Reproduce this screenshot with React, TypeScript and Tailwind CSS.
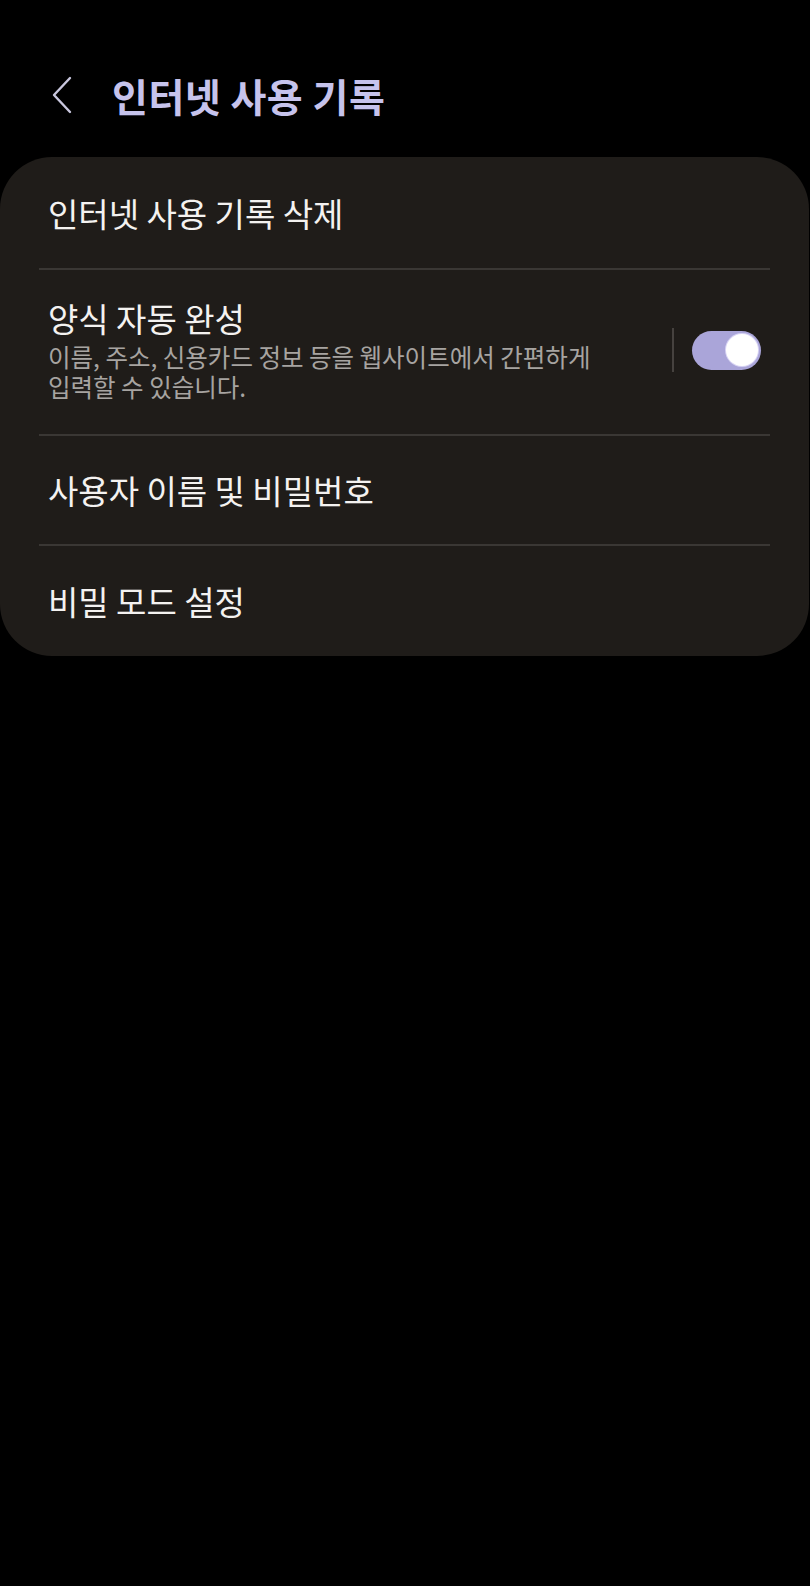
const font = { fontFamily: '"Noto Sans CJK KR", "Noto Sans", sans-serif' };

function Row({ children, h }: { children: React.ReactNode; h: string }) {
  return <div className={`flex items-center px-12 text-[33px] text-[#f4f2f0] leading-10 ${h}`}>{children}</div>;
}

function Divider() {
  return <div className="mx-[39px] h-[2px] bg-[#3a3734]" />;
}

export default function App() {
  return (
    <div className="min-h-[1586px] w-full bg-black pt-[71px]" style={font}>
      {/* HEADER */}
      <header className="flex items-center h-[48px] mb-[38px]">
        <div className="flex w-[112px] justify-start pl-[51px]">
          <svg width="22" height="38" viewBox="0 0 22 38" fill="none">
            <path d="M19 2 L3 19 L19 36" stroke="#c9c7de" strokeWidth="2.4" strokeLinecap="round" strokeLinejoin="round" />
          </svg>
        </div>
        <h1 className="text-[39px] font-bold text-[#c6c3ec] tracking-[0.5px]">인터넷 사용 기록</h1>
      </header>

      {/* CARD */}
      <section className="mr-[1px] rounded-[52px] bg-[#1f1c19]">
        <Row h="h-[111px]">인터넷 사용 기록 삭제</Row>
        <Divider />
        <div className="flex items-center pl-12 pr-[48px] pt-[28px] pb-[32px]">
          <div className="flex-1 min-w-0">
            <div className="text-[33px] leading-10 text-[#f4f2f0]">양식 자동 완성</div>
            <div className="mt-[4px] text-[24.5px] leading-[30px] text-[#a7a4a1]">
              이름, 주소, 신용카드 정보 등을 웹사이트에서 간편하게
              <br />
              입력할 수 있습니다.
            </div>
          </div>
          <div className="ml-4 h-[44px] w-[2px] bg-[#46423f]" />
          <div className="ml-[18px] flex h-[39px] w-[69px] items-center rounded-full bg-[#aaa5d9] pl-[34px]">
            <div className="h-[32px] w-[32px] rounded-full bg-white ring-1 ring-[#d8d4f4]" />
          </div>
        </div>
        <Divider />
        <Row h="h-[108px]">사용자 이름 및 비밀번호</Row>
        <Divider />
        <Row h="h-[110px]">비밀 모드 설정</Row>
      </section>
    </div>
  );
}
